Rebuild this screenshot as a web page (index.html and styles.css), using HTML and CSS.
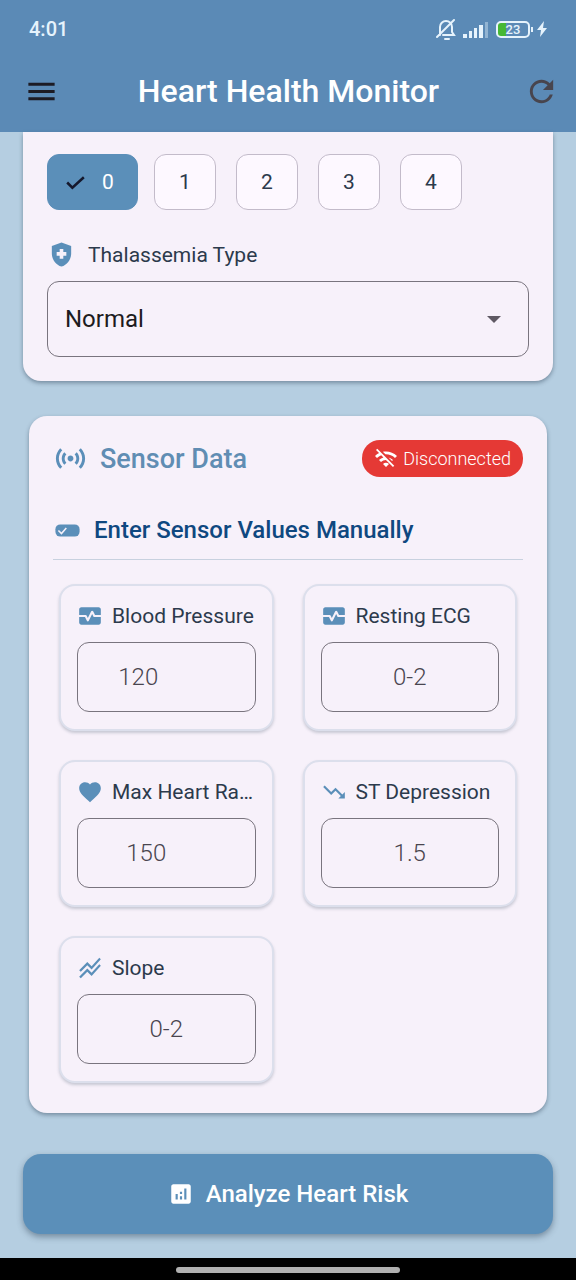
FILE: index.html
```html
<!DOCTYPE html>
<html lang="en">
<head>
<meta charset="utf-8">
<meta name="viewport" content="width=device-width, initial-scale=1">
<title>Heart Health Monitor</title>
<link rel="stylesheet" href="styles.css">
</head>
<body>
<div class="app">
  <header class="header">
    <div class="status">
      <span class="status-time">4:01</span>
      <div class="status-icons">
        <svg class="icon-bell" viewBox="0 0 20 22" fill="none" stroke="currentColor" stroke-width="2" stroke-linecap="round">
          <path d="M4 17V9a6 6 0 0 1 12 0v5l2 3H7M9 21h4M18 2L1 19"/>
        </svg>
        <svg class="icon-signal" viewBox="0 0 26 17" fill="currentColor">
          <path d="M0 13h4v4H0zM6 10h3v7H6zM11 7h3v10h-3zM16 4h4v13h-4z"/>
          <path d="M22 1h3v16h-3z" opacity=".4"/>
        </svg>
        <span class="battery"><span class="battery-level">23</span></span>
        <svg class="icon-bolt" viewBox="0 0 10 16" fill="currentColor"><path d="M7 0L0 9h4l-1 7 7-9H6z"/></svg>
      </div>
    </div>
    <div class="appbar">
      <button class="icon-button" type="button" aria-label="Menu">
        <svg class="icon-large" viewBox="0 0 24 24" fill="currentColor"><path d="M3 18h18v-2H3v2zm0-5h18v-2H3v2zm0-7v2h18V6H3z"/></svg>
      </button>
      <h1 class="title">Heart Health Monitor</h1>
      <button class="icon-button icon-button-muted" type="button" aria-label="Refresh">
        <svg class="icon-large" viewBox="0 0 24 24" fill="currentColor"><path d="M17.65 6.35C16.2 4.9 14.21 4 12 4c-4.42 0-7.99 3.58-7.99 8s3.57 8 7.99 8c3.73 0 6.84-2.55 7.73-6h-2.08c-.82 2.33-3.04 4-5.65 4-3.31 0-6-2.69-6-6s2.69-6 6-6c1.66 0 3.14.69 4.22 1.78L13 11h7V4l-2.35 2.35z"/></svg>
      </button>
    </div>
  </header>

  <main class="content">
    <section class="panel panel-options">
      <div class="chips" role="radiogroup" aria-label="Major vessels">
        <label class="chip chip-selected">
          <input class="chip-input" type="radio" name="vessels" checked>
          <svg class="icon-medium chip-check" viewBox="0 0 24 24" fill="none" stroke="currentColor" stroke-width="2.4"><path d="M4 12l5 5L20 7"/></svg>
          <span>0</span>
        </label>
        <label class="chip"><input class="chip-input" type="radio" name="vessels"><span>1</span></label>
        <label class="chip"><input class="chip-input" type="radio" name="vessels"><span>2</span></label>
        <label class="chip"><input class="chip-input" type="radio" name="vessels"><span>3</span></label>
        <label class="chip"><input class="chip-input" type="radio" name="vessels"><span>4</span></label>
      </div>
      <label class="field-label" for="thal">
        <svg class="icon-medium" viewBox="0 0 24 24" fill="currentColor" fill-rule="evenodd"><path d="M10.500 13H8v-3h2.500V7.500h3V10H16v3h-2.500v2.500h-3V13zM12 2L4 5v6.090c0 5.050 3.410 9.760 8 10.910 4.590-1.150 8-5.860 8-10.910V5l-8-3z"/></svg>
        <span class="field-text">Thalassemia Type</span>
      </label>
      <div class="select-box">
        <select class="select" id="thal">
          <option>Normal</option>
          <option>Fixed Defect</option>
          <option>Reversible Defect</option>
        </select>
        <svg class="select-arrow" viewBox="0 0 14 7" fill="currentColor"><path d="M0 0h14L7 7z"/></svg>
      </div>
    </section>

    <section class="panel panel-sensor">
      <div class="sensor-head">
        <svg class="icon-large" viewBox="0 0 24 24" fill="currentColor"><path d="M7.760 16.240C6.670 15.160 6 13.660 6 12s.67-3.160 1.760-4.240l1.420 1.420C8.450 9.900 8 10.900 8 12c0 1.100.45 2.100 1.170 2.830l-1.410 1.410zm8.480 0C17.330 15.160 18 13.660 18 12s-.67-3.160-1.760-4.240l-1.420 1.420C15.550 9.900 16 10.900 16 12c0 1.100-.45 2.100-1.170 2.830l1.410 1.410zM12 10c-1.100 0-2 .9-2 2s.9 2 2 2 2-.9 2-2-.9-2-2-2zm8 2c0 2.210-.9 4.210-2.350 5.650l1.420 1.420C20.880 17.260 22 14.760 22 12s-1.120-5.260-2.930-7.070l-1.420 1.420C19.100 7.790 20 9.790 20 12zM6.350 6.350L4.930 4.930C3.120 6.740 2 9.240 2 12s1.120 5.260 2.930 7.070l1.420-1.420C4.900 16.210 4 14.210 4 12s.9-4.210 2.350-5.650z"/></svg>
        <h2 class="sensor-title">Sensor Data</h2>
        <span class="badge">
          <svg class="icon-badge" viewBox="0 0 24 24" fill="currentColor"><path d="M22.990 9C19.150 5.160 13.800 3.760 8.840 4.780l2.520 2.520c3.470-.17 6.990 1.050 9.630 3.700l2-2zm-4 4c-1.290-1.290-2.840-2.130-4.490-2.560l3.530 3.530.96-.97zM2 3.050L5.070 6.100C3.600 6.820 2.220 7.780 1 9l1.990 2c1.240-1.240 2.670-2.160 4.200-2.770l2.240 2.240C7.810 10.890 6.270 11.730 5 13v.01L6.990 15c1.360-1.360 3.140-2.040 4.920-2.060L18.980 20l1.270-1.260L3.290 1.790 2 3.050zM9 17l3 3 3-3c-1.650-1.660-4.340-1.660-6 0z"/></svg>
          <span>Disconnected</span>
        </span>
      </div>

      <div class="manual-head">
        <svg class="icon-medium" viewBox="0 0 24 24"><rect x="2" y="7" width="20" height="10" rx="4" fill="currentColor"/><path d="M4.500 12l2.500 2.500L11 10" fill="none" stroke="#f7f1fa" stroke-width="1.300"/></svg>
        <h3 class="manual-title">Enter Sensor Values Manually</h3>
      </div>

      <div class="grid">
        <div class="card">
          <label class="card-label" for="bp">
            <svg class="icon-small" viewBox="0 0 24 24" fill="currentColor"><path d="M15.110 12.450L14 10.240l-3.110 6.210C10.730 16.790 10.380 17 10 17s-.73-.21-.89-.55L7.380 13H2v5c0 1.100.9 2 2 2h16c1.100 0 2-.9 2-2v-5h-6c-.38 0-.73-.21-.89-.55zM20 4H4c-1.100 0-2 .9-2 2v5h6c.38 0 .73.21.89.55L10 13.760l3.110-6.210c.34-.68 1.450-.68 1.790 0L16.620 11H22V6c0-1.100-.9-2-2-2z"/></svg>
            <span class="card-text">Blood Pressure</span>
          </label>
          <input class="value value-wide-unit" id="bp" type="text" inputmode="numeric" placeholder="120">
        </div>
        <div class="card">
          <label class="card-label" for="ecg">
            <svg class="icon-small" viewBox="0 0 24 24" fill="currentColor"><path d="M15.110 12.450L14 10.240l-3.110 6.210C10.730 16.790 10.380 17 10 17s-.73-.21-.89-.55L7.380 13H2v5c0 1.100.9 2 2 2h16c1.100 0 2-.9 2-2v-5h-6c-.38 0-.73-.21-.89-.55zM20 4H4c-1.100 0-2 .9-2 2v5h6c.38 0 .73.21.89.55L10 13.760l3.110-6.210c.34-.68 1.450-.68 1.790 0L16.620 11H22V6c0-1.100-.9-2-2-2z"/></svg>
            <span class="card-text">Resting ECG</span>
          </label>
          <input class="value" id="ecg" type="text" inputmode="numeric" placeholder="0-2">
        </div>
        <div class="card">
          <label class="card-label" for="rate">
            <svg class="icon-small" viewBox="0 0 24 24" fill="currentColor"><path d="M12 21.350l-1.450-1.320C5.400 15.360 2 12.280 2 8.500 2 5.420 4.420 3 7.500 3c1.740 0 3.410.81 4.500 2.090C13.090 3.810 14.760 3 16.500 3 19.580 3 22 5.420 22 8.500c0 3.780-3.400 6.860-8.550 11.540L12 21.350z"/></svg>
            <span class="card-text">Max Heart Rate</span>
          </label>
          <input class="value value-unit" id="rate" type="text" inputmode="numeric" placeholder="150">
        </div>
        <div class="card">
          <label class="card-label" for="st">
            <svg class="icon-small" viewBox="0 0 24 24" fill="currentColor"><path d="M16 18l2.290-2.290-4.880-4.880-4 4L2 7.410 3.410 6l6 6 4-4 6.300 6.290L22 12v6z"/></svg>
            <span class="card-text">ST Depression</span>
          </label>
          <input class="value" id="st" type="text" inputmode="decimal" placeholder="1.5">
        </div>
        <div class="card">
          <label class="card-label" for="slope">
            <svg class="icon-small" viewBox="0 0 24 24" fill="currentColor"><path d="M2 19.990l7.500-7.510 4 4 7.090-7.970L22 9.920l-8.500 9.560-4-4-6 6.010-1.500-1.500zm1.500-4.500l6-6.010 4 4L22 3.920l-1.410-1.410-7.090 7.970-4-4L2 13.990l1.500 1.500z"/></svg>
            <span class="card-text">Slope</span>
          </label>
          <input class="value" id="slope" type="text" inputmode="numeric" placeholder="0-2">
        </div>
      </div>
    </section>

    <button class="analyze" type="button">
      <svg class="icon-small" viewBox="0 0 24 24" fill="currentColor"><path d="M19 3H5c-1.100 0-2 .9-2 2v14c0 1.100.9 2 2 2h14c1.100 0 2-.9 2-2V5c0-1.100-.9-2-2-2zM9 17H7v-5h2v5zm4 0h-2v-3h2v3zm0-5h-2v-2h2v2zm4 5h-2V7h2v10z"/></svg>
      <span>Analyze Heart Risk</span>
    </button>
  </main>

  <footer class="gesture"><span class="gesture-pill"></span></footer>
</div>
</body>
</html>
```

FILE: styles.css
```css
* {
  box-sizing: border-box;
}

body {
  margin: 0;
  background: #b5cee1;
  color: #2c3a4c;
  font-family: Roboto, "Liberation Sans", sans-serif;
}

h1, h2, h3 {
  margin: 0;
  font-weight: 500;
}

button, input, select {
  font: inherit;
}

svg {
  display: block;
  flex: none;
}

.app {
  display: flex;
  flex-direction: column;
  min-height: 100vh;
}

/* Header */
.header {
  background: #5b8ab6;
  color: #fff;
}

.status {
  display: flex;
  align-items: center;
  justify-content: space-between;
  padding: 16px 29px 8px;
  height: 50px;
  color: #e6f3fc;
}

.status-time {
  font-size: 20px;
  font-weight: 500;
}

.status-icons {
  display: flex;
  align-items: center;
  gap: 7px;
}

.icon-bell {
  width: 20px;
  height: 22px;
}

.icon-signal {
  width: 26px;
  height: 17px;
}

.battery {
  position: relative;
  width: 34px;
  height: 17px;
  border: 2px solid #e6f3fc;
  border-radius: 5px;
  background: linear-gradient(90deg, #46b834 8px, transparent 8px);
}

.battery::after {
  content: "";
  position: absolute;
  top: 4px;
  right: -5px;
  width: 2px;
  height: 5px;
  background: #e6f3fc;
}

.battery-level {
  display: block;
  font-size: 13px;
  font-weight: 500;
  line-height: 13px;
  text-align: center;
}

.icon-bolt {
  width: 10px;
  height: 16px;
}

.appbar {
  display: flex;
  align-items: center;
  height: 82px;
  padding: 0 17px 0 24px;
}

.title {
  flex: 1;
  padding-right: 6px;
  font-size: 32px;
  line-height: 40px;
  text-align: center;
}

.icon-button {
  padding: 0;
  border: 0;
  background: none;
  color: #1c1b24;
}

.icon-button-muted {
  color: #48454e;
}

.icon-large {
  width: 35px;
  height: 35px;
}

.icon-medium {
  width: 29px;
  height: 29px;
}

.icon-small {
  width: 26px;
  height: 26px;
}

.icon-badge {
  width: 24px;
  height: 24px;
}

/* Panels */
.content {
  flex: 1;
  display: flex;
  flex-direction: column;
  padding: 0 23px 24px;
}

.panel {
  background: #f7f1fa;
  border-radius: 18px;
  box-shadow: 0 2px 4px rgba(40, 60, 80, 0.45);
}

.panel-options {
  border-radius: 0 0 18px 18px;
  padding: 22px 24px 24px;
}

.chips {
  display: flex;
  gap: 20px;
}

.chip {
  position: relative;
  display: flex;
  align-items: center;
  justify-content: center;
  width: 62px;
  height: 56px;
  border: 1px solid #c3bbca;
  border-radius: 12px;
  background: #fdf8ff;
  font-size: 21px;
}

.chip-selected {
  gap: 14px;
  width: 91px;
  margin-right: -4px;
  padding-right: 8px;
  border-color: #5b8fb9;
  background: #5b8fb9;
  color: #fff;
}

.chip-check {
  width: 25px;
  color: #15182c;
}

.chip-input {
  position: absolute;
  inset: 0;
  width: 100%;
  height: 100%;
  margin: 0;
  opacity: 0;
}

.field-label {
  display: flex;
  align-items: center;
  gap: 12px;
  padding: 30px 0 12px;
  color: #5b8fb9;
}

.field-text {
  color: #2c3a4c;
  font-size: 21px;
  line-height: 28px;
}

.select-box {
  position: relative;
}

.select {
  appearance: none;
  display: block;
  width: 100%;
  height: 76px;
  padding: 0 17px;
  border: 1px solid #79747e;
  border-radius: 12px;
  background: none;
  color: #1d1b20;
  font-size: 24px;
}

.select-arrow {
  position: absolute;
  top: 35px;
  right: 28px;
  width: 14px;
  height: 7px;
  color: #5f5963;
  pointer-events: none;
}

.panel-sensor {
  margin: 35px 6px 41px;
  padding: 24px 24px 30px;
}

.sensor-head {
  display: flex;
  align-items: center;
  gap: 12px;
  color: #5b8fb9;
}

.sensor-title {
  flex: 1;
  font-size: 27px;
  line-height: 36px;
  color: #608db3;
}

.badge {
  display: flex;
  align-items: center;
  gap: 5px;
  height: 37px;
  padding: 0 12px;
  border-radius: 18px;
  background: #e53935;
  color: #fff;
  font-size: 18px;
  font-weight: 300;
}

.manual-head {
  display: flex;
  align-items: center;
  gap: 12px;
  margin-top: 36px;
  padding-bottom: 12px;
  border-bottom: 1px solid #c8d1df;
  color: #5b8fb9;
}

.manual-title {
  color: #0f4880;
  font-size: 24px;
  line-height: 34px;
}

.grid {
  display: grid;
  grid-template-columns: 1fr 1fr;
  gap: 29px;
  padding: 24px 6px 0;
}

.card {
  min-width: 0;
  padding: 17px 16px;
  border: 2px solid #dcdfec;
  border-radius: 16px;
  background: #f7f1fa;
  box-shadow: 0 2px 3px rgba(60, 80, 100, 0.25);
}

.card-label {
  display: flex;
  align-items: center;
  gap: 9px;
  margin-bottom: 13px;
  color: #5b8fb9;
}

.card-text {
  min-width: 0;
  overflow: hidden;
  color: #2c3a4c;
  font-size: 21px;
  line-height: 26px;
  text-overflow: ellipsis;
  white-space: nowrap;
}

.value {
  display: block;
  width: 100%;
  height: 70px;
  padding: 0;
  border: 1px solid #79747e;
  border-radius: 12px;
  background: none;
  color: #49454f;
  font-size: 24px;
  font-weight: 300;
  text-align: center;
}

.value::placeholder {
  color: #49454f;
  opacity: 1;
}

.value-unit {
  padding-right: 40px;
}

.value-wide-unit {
  padding-right: 56px;
}

.analyze {
  display: flex;
  align-items: center;
  justify-content: center;
  gap: 12px;
  height: 80px;
  border: 0;
  border-radius: 18px;
  background: #5b8fb9;
  box-shadow: 0 3px 6px rgba(40, 60, 80, 0.45);
  color: #fff;
  font-size: 24px;
  font-weight: 500;
}

/* System gesture bar */
.gesture {
  display: flex;
  align-items: center;
  justify-content: center;
  height: 23px;
  background: #000;
}

.gesture-pill {
  width: 39%;
  height: 6px;
  border-radius: 3px;
  background: #b0b0b0;
}
```
